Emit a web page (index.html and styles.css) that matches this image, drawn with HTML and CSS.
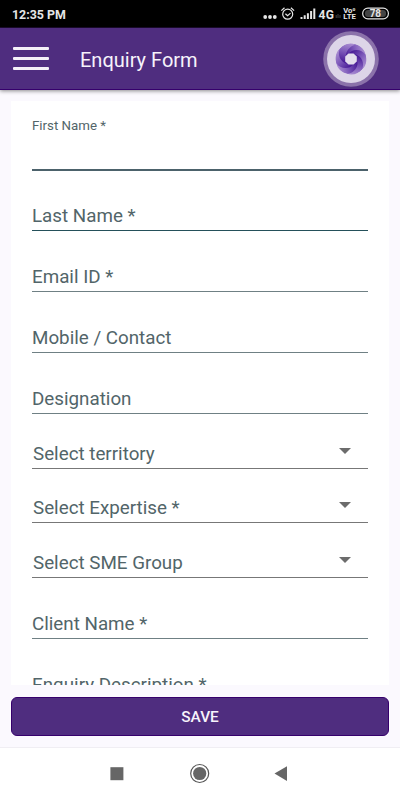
FILE: index.html
```html
<!DOCTYPE html>
<html lang="en">
<head>
<meta charset="utf-8">
<title>Enquiry Form</title>
<link rel="stylesheet" href="styles.css">
</head>
<body>
<div class="status">
  <span class="time">12:35 PM</span>
  <svg class="status-icons" width="140" height="28" viewBox="0 0 140 28">
    <g fill="#e6e6e6">
      <circle cx="5.2" cy="17" r="1.9"/><circle cx="10" cy="17" r="1.9"/><circle cx="14.8" cy="17" r="1.9"/>
      <path d="M40.5 19v-2h2v2zM43.7 19v-3.7h2V19zM46.9 19v-5.8h2V19zM50.1 19v-8h2v8zM53.3 19V8.5h2V19z"/>
    </g>
    <g fill="none" stroke="#e6e6e6" stroke-width="1.2">
      <circle cx="27.7" cy="14.2" r="5"/>
      <path d="M25.4 13.7l2.2 2 2.9-2.6M21.3 10.6l3.2-2.9M34.1 10.6l-3.2-2.9"/>
      <rect x="102.7" y="8.1" width="25.7" height="10.8" rx="5.2"/>
    </g>
    <rect x="105" y="10" width="21" height="7" rx="3" fill="#444"/>
    <path d="M76.2 15v3M78 14v4M80 15v3" stroke="#444"/>
    <g class="status-text" fill="#e6e6e6">
      <text x="58.5" y="19" font-size="12" textLength="15.5">4G</text>
      <text x="83.3" y="12.6" font-size="7" textLength="12" lengthAdjust="spacingAndGlyphs">Vo⁰</text>
      <text x="83.3" y="19.4" font-size="7.4" textLength="12.5" lengthAdjust="spacingAndGlyphs">LTE</text>
      <text x="109.8" y="17.3" font-size="10" textLength="11.2">78</text>
    </g>
  </svg>
</div>
<header class="bar">
  <div class="menu"><i></i><i></i><i></i></div>
  <h1>Enquiry Form</h1>
  <svg class="logo" width="56" height="56" viewBox="-28 -28 56 56">
    <defs>
      <linearGradient id="blade" gradientUnits="userSpaceOnUse" x1="-5" y1="-2" x2="13" y2="-7">
        <stop offset="0" stop-color="#4c1f99"/><stop offset=".5" stop-color="#7a55b8"/><stop offset="1" stop-color="#a78ad0"/>
      </linearGradient>
    </defs>
    <circle r="27.8" fill="#8b72aa"/><circle r="24" fill="#ddd5e8"/>
    <circle r="15" fill="#7650b3"/>
    <g fill="url(#blade)">
      <path id="b" d="M-5.8 0C-9-8-2-14.5 3-14.7C9-14 14.5-9 14.5-3.5C9-9-1-9-5.8 0Z"/>
      <use href="#b" transform="rotate(60)"/><use href="#b" transform="rotate(120)"/><use href="#b" transform="rotate(180)"/><use href="#b" transform="rotate(240)"/><use href="#b" transform="rotate(300)"/>
    </g>
    <path d="M-2.5-5.6h5L5.8-2.4v4.8L2.5 5.6h-5L-5.8 2.4v-4.8z" fill="#e4dded"/>
  </svg>
</header>
<main class="page">
  <form class="card">
    <div class="field active"><label>First Name *</label></div>
    <div class="field dark"><label>Last Name *</label></div>
    <div class="field"><label>Email ID *</label></div>
    <div class="field"><label>Mobile / Contact</label></div>
    <div class="field"><label>Designation</label></div>
    <div class="field select"><label>Select territory</label><b class="arrow"></b></div>
    <div class="field select second"><label>Select Expertise *</label><b class="arrow"></b></div>
    <div class="field select"><label>Select SME Group</label><b class="arrow"></b></div>
    <div class="field"><label>Client Name *</label></div>
    <div class="field"><label>Enquiry Description *</label></div>
  </form>
  <button class="save">SAVE</button>
</main>
<nav class="nav">
  <svg width="400" height="52" viewBox="0 0 400 52" fill="#666">
    <rect x="110.4" y="19.2" width="13" height="13"/>
    <circle cx="199.7" cy="25.5" r="9" fill="none" stroke="#555" stroke-width="1.2"/>
    <circle cx="199.7" cy="25.5" r="6.6"/>
    <path d="M274.5 25.5L287 18.3v14.6z"/>
  </svg>
</nav>
</body>
</html>
```
FILE: styles.css
```css
* { box-sizing: border-box; }
body {
  margin: 0;
  width: 400px;
  height: 800px;
  overflow: hidden;
  display: flex;
  flex-direction: column;
  font-family: Roboto, "Liberation Sans", sans-serif;
  background: #fbf9fe;
}
.status {
  height: 28px;
  flex: none;
  display: flex;
  align-items: center;
  justify-content: space-between;
  padding-left: 12px;
  background: linear-gradient(#000 27px, #1b0c2e 27px);
  color: #e6e6e6;
}
.time { font-size: 12.4px; font-weight: 700; line-height: 28px; padding-top: 1px; }
.status-text { font-weight: 700; }
.bar {
  height: 62px;
  flex: none;
  display: flex;
  align-items: center;
  padding: 0 21px 0 13px;
  background: #4f2d7f;
  border-bottom: 1px solid #36006c;
  box-shadow: 0 1px 4px rgba(0, 0, 0, .45);
}
.menu { width: 36px; display: flex; flex-direction: column; gap: 7px; }
.menu i { height: 3px; border-radius: 1px; background: #f4f0f8; }
h1 { margin: 0 auto 0 31px; padding-top: 3px; font-size: 20px; font-weight: 400; line-height: 24px; color: #f7f3fb; }
.page { flex: 1; display: flex; flex-direction: column; padding: 11px 11px 0; min-height: 0; }
.card {
  height: 584px;
  flex: none;
  overflow: hidden;
  padding: 0 21px;
  background: #fff;
}
.field {
  height: 61px;
  display: flex;
  align-items: flex-end;
  padding-bottom: 3px;
  border-bottom: 1px solid #6f8084;
  color: #526569;
  font-size: 18.8px;
  line-height: 22px;
}
.field.active {
  height: 70px;
  align-items: flex-start;
  padding-top: 17px;
  border-bottom: 2px solid #4c626b;
  font-size: 13.3px;
  line-height: 16px;
}
.field.dark { height: 60px; border-color: #24505a; }
.field.select { height: 55px; justify-content: space-between; padding-left: 1px; border-color: #777; }
.field.second { height: 54px; }
.arrow {
  margin: 0 17px 11px 0;
  border: 5.5px solid transparent;
  border-width: 6px 6px 0;
  border-top-color: #6c6c6c;
}
.save {
  height: 39px;
  flex: none;
  margin-top: 12px;
  border: 1px solid #36006c;
  border-radius: 6px;
  background: #4f2d7f;
  color: #f7f3fb;
  font: 500 15.4px Roboto, sans-serif;
}
.nav { height: 53px; flex: none; background: #fff; border-top: 1px solid #f0eef3; }
.nav svg, .logo { display: block; }
```
